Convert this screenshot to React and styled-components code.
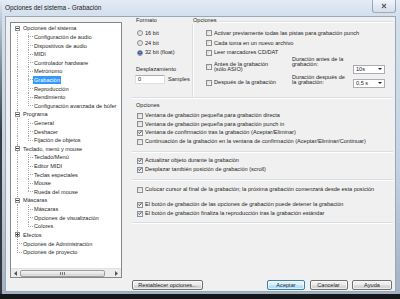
import React from "react"
import styled, { createGlobalStyle } from "styled-components"

const GlobalStyle = createGlobalStyle`
  html, body {
    margin: 0;
    padding: 0;
  }
  body {
    width: 400px;
    height: 299px;
    overflow: hidden;
    background: linear-gradient(to bottom, #6d7884 0%, #2c3137 75%, #141719 100%);
    font-family: "Liberation Sans", Arial, sans-serif;
  }
`

const LINE = "#a8a8a8"
const vLine = `repeating-linear-gradient(to bottom, ${LINE} 0 1px, transparent 1px 2px)`
const hLine = `repeating-linear-gradient(to right, ${LINE} 0 1px, transparent 1px 2px)`

const tree = [
  { label: "Opciones del sistema", root: true, box: "minus", first: true },
  { label: "Configuración de audio" },
  { label: "Dispositivos de audio" },
  { label: "MIDI" },
  { label: "Controlador hardware" },
  { label: "Metrónomo" },
  { label: "Grabación", selected: true },
  { label: "Reproducción" },
  { label: "Rendimiento" },
  { label: "Configuración avanzada de búfer", last: true },
  { label: "Programa", root: true, box: "minus" },
  { label: "General" },
  { label: "Deshacer" },
  { label: "Fijación de objetos", last: true },
  { label: "Teclado, menú y mouse", root: true, box: "minus" },
  { label: "Teclado/Menú" },
  { label: "Editor MIDI" },
  { label: "Teclas especiales" },
  { label: "Mouse" },
  { label: "Rueda del mouse", last: true },
  { label: "Máscaras", root: true, box: "minus" },
  { label: "Máscaras" },
  { label: "Opciones de visualización" },
  { label: "Colores", last: true },
  { label: "Efectos", root: true, box: "plus" },
  { label: "Opciones de Administración", root: true },
  { label: "Opciones de proyecto", root: true, lastRoot: true },
]

const recOptions = [
  { label: "Ventana de grabación pequeña para grabación directa" },
  { label: "Ventana de grabación pequeña para grabación punch in" },
  { label: "Ventana de confirmación tras la grabación (Aceptar/Eliminar)", on: true },
  { label: "Continuación de la grabación en la ventana de confirmación (Aceptar/Eliminar/Continuar)" },
]

const CheckMark = () => (
  <svg width="5" height="5" viewBox="0 0 5 5">
    <path d="M0.6 2.4 L1.9 3.8 L4.4 0.7" fill="none" stroke="#2c4682" strokeWidth="1.1" />
  </svg>
)

const TreeItem = ({ item }) => {
  const rootV = item.first ? "bottom" : item.lastRoot ? "top" : "full"
  if (item.root) {
    return (
      <TreeRow>
        <Guide $v={rootV} $h={!item.box}>
          {item.box && <ExpBox $plus={item.box === "plus"} />}
        </Guide>
        <TreeLabel>{item.label}</TreeLabel>
      </TreeRow>
    )
  }
  return (
    <TreeRow>
      <Guide $v="full" />
      <Guide $v={item.last ? "top" : "full"} $h />
      <TreeLabel $selected={item.selected}>{item.label}</TreeLabel>
    </TreeRow>
  )
}

const Option = ({ on, h, children }) => (
  <CheckRow $h={h}>
    <Check>{on && <CheckMark />}</Check>
    <span>{children}</span>
  </CheckRow>
)

const Arrow = ({ dir }) => (
  <svg width="3" height="5" viewBox="0 0 3 5">
    <path d={dir === "left" ? "M3 0 L0 2.5 L3 5Z" : "M0 0 L3 2.5 L0 5Z"} fill="#555" />
  </svg>
)

const App = () => (
  <>
    <GlobalStyle />
    <Window>
      <TitleBar>
        <Title>Opciones del sistema - Grabación</Title>
        <CloseButton>
          <svg width="6" height="6" viewBox="0 0 6 6">
            <path d="M1 1 L5 5 M5 1 L1 5" stroke="#56616f" strokeWidth="1.1" />
          </svg>
        </CloseButton>
      </TitleBar>

      <Body>
        <TreeBox>
          <TreeList>
            {tree.map((item, i) => (
              <TreeItem key={i} item={item} />
            ))}
          </TreeList>
          <HScroll>
            <ScrollArrow><Arrow dir="left" /></ScrollArrow>
            <Track>
              <Thumb><Grip /></Thumb>
            </Track>
            <ScrollArrow><Arrow dir="right" /></ScrollArrow>
          </HScroll>
        </TreeBox>

        <RightCol>
          <TopSection>
            <FormatCol>
              <GroupLabel>Formato</GroupLabel>
              <List $mt={4.5}>
                <CheckRow $h={9.7}><Radio />16 bit</CheckRow>
                <CheckRow $h={9.7}><Radio />24 bit</CheckRow>
                <CheckRow $h={9.7}><Radio $on />32 bit (float)</CheckRow>
              </List>
              <GroupLabel $mt={8.9}>Desplazamiento</GroupLabel>
              <InputRow>
                <TextInput>0</TextInput>
                <span>Samples</span>
              </InputRow>
            </FormatCol>

            <OptGroup>
              <OptHead>
                <GroupLabel>Opciones</GroupLabel>
                <Rule />
              </OptHead>
              <OptBody>
                <List $mt={4.5}>
                  <Option h={9.7}>Activar previamente todas las pistas para grabación punch</Option>
                  <Option h={9.7}>Cada toma en un nuevo archivo</Option>
                  <Option h={9.7}>Leer marcadores CD/DAT</Option>
                </List>
                <DurRow $h={18}>
                  <Option>Antes de la grabación<br />(sólo ASIO)</Option>
                  <DurLabel $mt={-1}>Duración antes de la<br />grabación:</DurLabel>
                  <Dropdown $mb={1.6}>10s<Caret /></Dropdown>
                </DurRow>
                <DurRow $h={14}>
                  <Option>Después de la grabación</Option>
                  <DurLabel $mt={-0.9}>Duración después de<br />la grabación:</DurLabel>
                  <Dropdown $mb={1.6}>0,5 s<Caret /></Dropdown>
                </DurRow>
              </OptBody>
            </OptGroup>
          </TopSection>

          <LowerSection $pt={3.5} $pb={5}>
            <GroupLabel>Opciones</GroupLabel>
            <List $mt={2.85}>
              {recOptions.map((o, i) => (
                <Option key={i} on={o.on} h={8.67}>{o.label}</Option>
              ))}
            </List>
          </LowerSection>

          <LowerSection $pt={4.65} $pb={5}>
            <Option on h={8.67}>Actualizar objeto durante la grabación</Option>
            <Option on h={8.67}>Desplazar también posición de grabación (scroll)</Option>
          </LowerSection>

          <LowerSection $pt={5.65} $pb={4}>
            <Option h={8.67}>
              Colocar cursor al final de la grabación; la próxima grabación comenzará desde esta posición
            </Option>
            <List $mt={6.35}>
              <Option on h={8.67}>El botón de grabación de las opciones de grabación puede detener la grabación</Option>
              <Option on h={8.67}>El botón de grabación finaliza la reproducción tras la grabación estándar</Option>
            </List>
          </LowerSection>

          <ButtonRow>
            <Button $w={71}>Restablecer opciones...</Button>
            <Spacer />
            <Button $w={38} $default>Aceptar</Button>
            <Button $w={38}>Cancelar</Button>
            <Button $w={40}>Ayuda</Button>
          </ButtonRow>
        </RightCol>
      </Body>
    </Window>
  </>
)

export default App

const Window = styled.div`
  width: 400px;
  height: 294px;
  box-sizing: border-box;
  display: flex;
  flex-direction: column;
  padding: 0 4px 2px 5px;
  background:
    linear-gradient(to bottom, rgba(30, 34, 38, 0) 0, rgba(30, 34, 38, 0.85) 45%) 0 0 / 2px 100% no-repeat,
    linear-gradient(to bottom, #e3ecf6 0, #d4e0ed 14px, #c5d3e2 55%, #a3b1c0 100%);
`

const TitleBar = styled.div`
  height: 16px;
  flex: none;
  display: flex;
  align-items: flex-start;
`

const Title = styled.div`
  font-size: 6.4px;
  line-height: 16px;
  color: #1b1b1b;
  white-space: nowrap;
`

const CloseButton = styled.div`
  margin-left: auto;
  width: 24px;
  height: 13px;
  box-sizing: border-box;
  display: flex;
  align-items: center;
  justify-content: center;
  border: 1px solid rgba(70, 84, 102, 0.45);
  border-top: 0;
  border-radius: 0 0 3px 3px;
  background: linear-gradient(to bottom, #f1f5f9, #d5dfea);
`

const Body = styled.div`
  flex: 1;
  min-height: 0;
  display: grid;
  grid-template-columns: 112px 1fr;
  column-gap: 10px;
  padding-left: 4px;
  background: #f0f0f0;
  border: 1px solid #99a8b8;
  color: #1f1f1f;
  font-size: 5.6px;
`

const TreeBox = styled.div`
  margin: 5px 0 13px;
  border: 1px solid #828790;
  background: #fff;
  display: flex;
  flex-direction: column;
  overflow: hidden;
`

const TreeList = styled.div`
  flex: 1;
  padding-top: 1px;
  overflow: hidden;
`

const TreeRow = styled.div`
  height: 8.615px;
  display: flex;
  align-items: stretch;
  white-space: nowrap;
`

const guideLayers = ({ $v, $h }) => {
  const layers = []
  if ($h) layers.push(`${hLine} 6px 50% / 5px 1px no-repeat`)
  if ($v === "full") layers.push(`${vLine} 6px 0 / 1px 100% no-repeat`)
  if ($v === "top") layers.push(`${vLine} 6px 0 / 1px 50% no-repeat`)
  if ($v === "bottom") layers.push(`${vLine} 6px 100% / 1px 50% no-repeat`)
  return layers.length ? layers.join(", ") : "transparent"
}

const Guide = styled.span`
  flex: none;
  width: 11px;
  display: flex;
  align-items: center;
  background: ${guideLayers};
`

const ExpBox = styled.span`
  width: 5px;
  height: 5px;
  margin-left: 4px;
  box-sizing: border-box;
  border: 1px solid #8f8f8f;
  background:
    ${p => (p.$plus ? "linear-gradient(#444, #444) 50% 50% / 1px 3px no-repeat," : "")}
    linear-gradient(#444, #444) 50% 50% / 3px 1px no-repeat,
    #fff;
`

const TreeLabel = styled.span`
  align-self: center;
  height: 8px;
  line-height: 8px;
  padding: 0 1.5px 0 1px;
  background: ${p => (p.$selected ? "#3399ff" : "transparent")};
  color: ${p => (p.$selected ? "#fff" : "#1f1f1f")};
`

const HScroll = styled.div`
  flex: none;
  height: 9px;
  display: flex;
  background: #ececec;
  border-top: 1px solid #e2e2e2;
  box-sizing: border-box;
`

const ScrollArrow = styled.div`
  width: 9px;
  display: flex;
  align-items: center;
  justify-content: center;
`

const Track = styled.div`
  flex: 1;
  display: flex;
  padding: 0.5px 0;
`

const Thumb = styled.div`
  width: 85px;
  box-sizing: border-box;
  display: flex;
  align-items: center;
  justify-content: center;
  border: 1px solid #9c9c9c;
  border-radius: 2px;
  background: linear-gradient(to bottom, #f4f4f4 0, #e6e6e6 50%, #d6d6d6 51%, #dedede 100%);
`

const Grip = styled.span`
  width: 5px;
  height: 3px;
  background: repeating-linear-gradient(to right, #777 0 1px, transparent 1px 2px);
`

const RightCol = styled.div`
  display: flex;
  flex-direction: column;
  padding-right: 2px;
  min-width: 0;
`

const TopSection = styled.div`
  flex: none;
  height: 81px;
  box-sizing: border-box;
  display: flex;
  border-bottom: 1px solid #d5dfe5;
  box-shadow: 0 1px 0 #fff;
`

const FormatCol = styled.div`
  width: 60px;
  flex: none;
  box-sizing: border-box;
  padding-left: 4px;
  display: flex;
  flex-direction: column;
`

const GroupLabel = styled.div`
  height: 7px;
  line-height: 7px;
  margin-top: ${p => p.$mt || 0}px;
  white-space: nowrap;
  flex: none;
`

const List = styled.div`
  margin-top: ${p => p.$mt || 0}px;
  display: flex;
  flex-direction: column;
`

const CheckRow = styled.div`
  height: ${p => (p.$h ? `${p.$h}px` : "auto")};
  display: flex;
  align-items: center;
  gap: 2px;
  padding-left: 1px;
  white-space: nowrap;
  line-height: 5px;
`

const Radio = styled.span`
  flex: none;
  width: 6px;
  height: 6px;
  box-sizing: border-box;
  border-radius: 50%;
  border: 1px solid #8e8f8f;
  background: ${p =>
    p.$on
      ? "radial-gradient(circle at 50% 40%, #9cc4ef 0, #2f6dbb 1.1px, #184d8f 1.9px, #e4e4e4 2.1px)"
      : "linear-gradient(135deg, #d4d4d4, #f8f8f8)"};
`

const Check = styled.span`
  flex: none;
  width: 6px;
  height: 6px;
  box-sizing: border-box;
  display: flex;
  align-items: center;
  justify-content: center;
  border: 1px solid #8e8f8f;
  background: linear-gradient(135deg, #d8d8d8, #f9f9f9);
  overflow: visible;
`

const InputRow = styled.div`
  margin-top: 1.5px;
  height: 9px;
  display: flex;
  align-items: center;
  gap: 3px;
  white-space: nowrap;
`

const TextInput = styled.div`
  width: 30px;
  height: 9px;
  margin-left: -1px;
  box-sizing: border-box;
  padding-left: 2px;
  line-height: 7px;
  background: #fff;
  border: 1px solid #dbdfe6;
  border-top-color: #abadb3;
`

const OptGroup = styled.div`
  flex: 1;
  display: flex;
  flex-direction: column;
`

const OptHead = styled.div`
  height: 7px;
  display: flex;
  align-items: center;
  gap: 2px;
  padding-left: 1px;
`

const Rule = styled.span`
  flex: 1;
  margin-top: 2px;
  border-top: 1px solid #d5dfe5;
  border-bottom: 1px solid #fff;
`

const OptBody = styled.div`
  flex: 1;
  padding-left: 12px;
  border-left: 1px solid #d5dfe5;
  box-shadow: inset 1px 0 0 #fff;
`

const DurRow = styled.div`
  height: ${p => p.$h}px;
  display: grid;
  grid-template-columns: 87px 61px 32px;
  align-items: center;
`

const DurLabel = styled.div`
  align-self: start;
  margin-top: ${p => p.$mt}px;
  line-height: 5.8px;
  white-space: nowrap;
`

const Dropdown = styled.div`
  align-self: end;
  margin-bottom: ${p => p.$mb}px;
  height: 9px;
  box-sizing: border-box;
  display: flex;
  align-items: center;
  padding-left: 2px;
  background: #fff;
  border: 1px solid #abadb3;
  white-space: nowrap;
`

const Caret = styled.span`
  margin-left: auto;
  margin-right: 2px;
  width: 0;
  height: 0;
  border-left: 2px solid transparent;
  border-right: 2px solid transparent;
  border-top: 2px solid #222;
`

const LowerSection = styled.section`
  flex: none;
  padding: ${p => p.$pt}px 0 ${p => p.$pb}px 4px;
  border-bottom: 1px solid #d5dfe5;
  box-shadow: 0 1px 0 #fff;
  display: flex;
  flex-direction: column;
`

const ButtonRow = styled.div`
  margin-top: auto;
  margin-bottom: 1px;
  margin-right: 1px;
  height: 10px;
  display: flex;
  gap: 4.5px;
`

const Spacer = styled.span`
  flex: 1;
`

const Button = styled.div`
  width: ${p => p.$w}px;
  height: 10px;
  box-sizing: border-box;
  display: flex;
  align-items: center;
  justify-content: center;
  border-radius: 2px;
  white-space: nowrap;
  border: 1px solid ${p => (p.$default ? "#3c7fb1" : "#707070")};
  background: ${p =>
    p.$default
      ? "linear-gradient(to bottom, #eaf6fd 0, #d9f0fc 50%, #bee6fd 51%, #a7d9f5 100%)"
      : "linear-gradient(to bottom, #f2f2f2 0, #ebebeb 50%, #dddddd 51%, #cfcfcf 100%)"};
  box-shadow: inset 0 0 0 1px rgba(255, 255, 255, 0.6);
`
